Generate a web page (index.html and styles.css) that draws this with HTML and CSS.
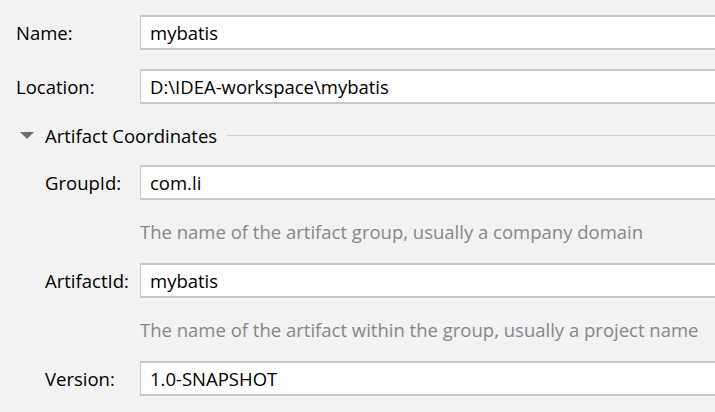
FILE: index.html
```html
<!DOCTYPE html>
<html lang="en">
<head>
    <meta charset="UTF-8">
    <title>New Project</title>
    <link rel="stylesheet" href="styles.css">
</head>
<body>
    <div class="form">
        <div class="row">
            <label class="label" for="name">Name:</label>
            <input class="field" id="name" type="text" value="mybatis">
        </div>
        <div class="row">
            <label class="label" for="location">Location:</label>
            <input class="field" id="location" type="text" value="D:\IDEA-workspace\mybatis">
        </div>

        <div class="section-title">
            <span class="caret"></span>
            <span class="title-text">Artifact Coordinates</span>
            <span class="rule"></span>
        </div>

        <div class="group">
            <div class="row">
                <label class="label" for="group-id">GroupId:</label>
                <input class="field" id="group-id" type="text" value="com.li">
            </div>
            <div class="hint">The name of the artifact group, usually a company domain</div>
            <div class="row">
                <label class="label" for="artifact-id">ArtifactId:</label>
                <input class="field" id="artifact-id" type="text" value="mybatis">
            </div>
            <div class="hint">The name of the artifact within the group, usually a project name</div>
            <div class="row">
                <label class="label" for="version">Version:</label>
                <input class="field" id="version" type="text" value="1.0-SNAPSHOT">
            </div>
        </div>
    </div>
</body>
</html>
```

FILE: styles.css
```css
body {
    margin: 0;
    padding: 0;
    background-color: #f2f2f2;
    color: #000;
    font-family: "Open Sans", Arial, sans-serif;
    font-size: 18.5px;
    overflow: hidden;
}
.form {
    padding: 15px 0 0 16px;
    margin-right: -20px;
}
.row {
    display: flex;
    align-items: center;
    height: 35px;
    margin-bottom: 19px;
}
.label {
    width: 124px;
    flex-shrink: 0;
}
.field {
    flex: 1;
    height: 35px;
    box-sizing: border-box;
    margin: 0;
    padding: 0 0 0 9px;
    border: 1px solid #c8c8c8;
    border-width: 2px 1px;
    background-color: #fff;
    color: #000;
    font-family: inherit;
    font-size: 18.5px;
    outline: none;
}
.section-title {
    display: flex;
    align-items: center;
    height: 24px;
    margin: 1px 0 18px 0;
}
.caret {
    width: 0;
    height: 0;
    margin: 0 11px 0 4px;
    border-left: 7px solid transparent;
    border-right: 7px solid transparent;
    border-top: 7px solid #6e6e6e;
}
.title-text {
    margin-right: 10px;
}
.rule {
    flex: 1;
    height: 1px;
    background-color: #d2d2d2;
}
.group {
    padding-left: 29px;
}
.group .label {
    width: 95px;
}
.group .row {
    margin-bottom: 0;
}
.hint {
    height: 63px;
    display: flex;
    align-items: center;
    padding-left: 95px;
    color: #888;
}
```
